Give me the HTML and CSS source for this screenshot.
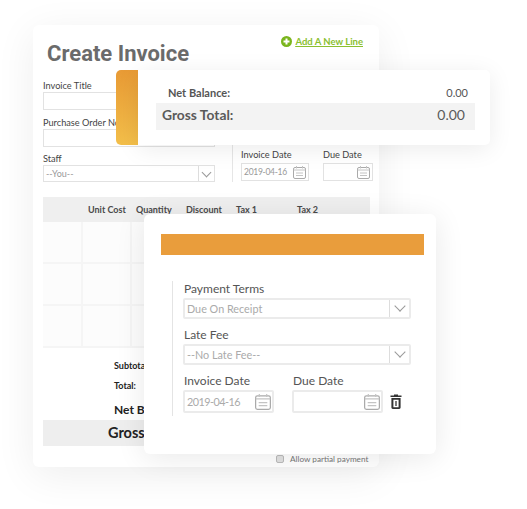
FILE: index.html
```html
<!DOCTYPE html>
<html lang="en">
<head>
  <meta charset="UTF-8">
  <title>Create Invoice</title>
  <link rel="stylesheet" href="styles.css">
</head>
<body>
<div class="page">
  <div class="invoice">
    <div class="head">
      <h1>Create Invoice</h1>
      <a class="add-line" href="#">
        <svg width="11" height="11" viewBox="0 0 11 11"><circle cx="5.5" cy="5.5" r="5.5" fill="#7ab51d"/><path d="M5.5 2.5v6M2.5 5.5h6" stroke="#fff" stroke-width="2"/></svg>
        <span>Add A New Line</span>
      </a>
    </div>
    <div class="form">
      <div class="form-left">
        <label>Invoice Title</label>
        <div class="input"></div>
        <label>Purchase Order No</label>
        <div class="input"></div>
        <label>Staff</label>
        <div class="input select"><span>--You--</span><i class="arrow"></i></div>
      </div>
      <div class="form-right">
        <div class="date">
          <label>Invoice Date</label>
          <div class="input w68"><span class="day">2019-04-16</span>
            <svg class="cal" width="13" height="13" viewBox="0 0 13 13"><use href="#cal"/></svg>
          </div>
        </div>
        <div class="date">
          <label>Due Date</label>
          <div class="input w50">
            <svg class="cal" width="13" height="13" viewBox="0 0 13 13"><use href="#cal"/></svg>
          </div>
        </div>
      </div>
    </div>
    <div class="table-head">
      <span class="c1">Unit Cost</span><span class="c2">Quantity</span><span class="c3">Discount</span><span class="c4">Tax 1</span><span class="c5">Tax 2</span>
    </div>
    <div class="rows">
      <div class="row"><i></i><i></i><i></i></div>
      <div class="row"><i></i><i></i><i></i></div>
      <div class="row"><i></i><i></i><i></i></div>
    </div>
    <div class="totals">
      <p class="sub">Subtotal:</p>
      <p class="total">Total:</p>
      <p class="net">Net Balance:</p>
    </div>
    <div class="gross">Gross Total:</div>
    <div class="partial"><i class="check"></i><span>Allow partial payment</span></div>
  </div>

  <div class="balance">
    <div class="tab"></div>
    <div class="balance-body">
      <div class="net-line"><span>Net Balance:</span><span>0.00</span></div>
      <div class="gross-line"><b>Gross Total:</b><span>0.00</span></div>
    </div>
  </div>

  <div class="terms">
    <div class="terms-bar"></div>
    <div class="terms-form">
      <label>Payment Terms</label>
      <div class="field select"><span>Due On Receipt</span><i class="arrow"></i></div>
      <label>Late Fee</label>
      <div class="field select"><span>--No Late Fee--</span><i class="arrow"></i></div>
      <div class="dates">
        <div>
          <label>Invoice Date</label>
          <div class="field w91"><span class="day">2019-04-16</span>
            <svg class="cal" width="16" height="16" viewBox="0 0 13 13"><use href="#cal"/></svg>
          </div>
        </div>
        <div>
          <label>Due Date</label>
          <div class="field w91 end">
            <svg class="cal" width="16" height="16" viewBox="0 0 13 13"><use href="#cal"/></svg>
          </div>
        </div>
        <svg class="trash" width="12" height="15" viewBox="0 0 12 15"><path d="M4 1.5V.6h4v.9h3.5v1.6H.5V1.500zM1.400 4h9.200v9.600c0 .8-.6 1.400-1.400 1.400H2.800c-.8 0-1.400-.6-1.400-1.400zM3.400 5.800v7.400h5.200V5.800z" fill="#333"/><path d="M6 7v5" stroke="#333" stroke-width="1.300"/></svg>
      </div>
    </div>
  </div>
</div>

<svg width="0" height="0" class="defs">
  <symbol id="cal" viewBox="0 0 13 13">
    <rect x=".5" y="1.500" width="12" height="11" rx="1.500" fill="none" stroke="#aaa"/>
    <path d="M.5 4h12M3.500 0v2.500M9.500 0v2.500M3 7h7M3 9.500h7" stroke="#c4c4c4" fill="none"/>
  </symbol>
</svg>
</body>
</html>
```

FILE: styles.css
```css
*{box-sizing:border-box;}
body{margin:0;background:#fff;font-family:"Lato","Liberation Sans",sans-serif;color:#444;}
p,h1{margin:0;}
.defs{position:absolute;}
.page{position:relative;width:527px;height:509px;overflow:hidden;}

.invoice{margin:25px 0 0 33px;width:346px;height:442px;padding:0 9px 0 10px;background:#fff;border-radius:6px;box-shadow:0 8px 40px rgba(0,0,0,.07);font-size:9.200px;position:relative;}
.head{display:flex;justify-content:space-between;height:54px;padding:16px 7px 0 4px;}
h1{font:700 22px/26px Roboto,sans-serif;color:#6b6b6b;}
.add-line{display:flex;align-items:flex-start;gap:3px;color:#8bc02f;font-size:9.500px;font-weight:700;line-height:11px;margin-top:-5px;height:11px;}
.add-line span{text-decoration:underline;}
.form{display:flex;height:118px;}
.form-left{width:172px;flex:none;}
.form-left label{display:block;line-height:13px;}
.input{height:18px;border:1px solid #e2e2e2;display:flex;align-items:center;justify-content:space-between;padding:0 2px;color:#999;font-size:9px;}
.form-left .input{margin-bottom:6px;}
.form-left .input:nth-of-type(2){margin-bottom:5px;}
.form-left .select{height:17px;padding-right:0;}
.form-right{display:flex;gap:14px;margin-left:17px;margin-top:60px;height:43px;border-left:1px solid #e6e6e6;padding:9px 0 0 8px;}
.date label{display:block;line-height:14px;margin-bottom:1px;}
.w68{width:68px;}
.w50{width:50px;justify-content:flex-end;}
.day{font-size:8.500px;letter-spacing:-.3px;}
.select .arrow{display:block;width:16px;height:100%;border-left:1px solid #ddd;position:relative;flex:none;}
.arrow:after{content:"";position:absolute;left:4px;top:3px;width:6px;height:6px;border-right:1px solid #999;border-bottom:1px solid #999;transform:rotate(45deg);}

.table-head{height:25px;background:#efefef;position:relative;font-size:9px;font-weight:700;color:#4a4a4a;}
.table-head span{position:absolute;top:7px;}
.c1{left:45px;}.c2{left:93px;}.c3{left:143px;}.c4{left:193px;}.c5{left:254px;}
.rows{height:125px;}
.row{display:flex;height:42px;border-bottom:2px solid #f5f5f5;background:#fcfcfc;}
.row i{display:block;height:100%;border-right:2px solid #f5f5f5;width:49px;}
.row i:first-child{width:40px;}
.totals{padding:13px 0 0 71px;height:74px;color:#222;}
.sub,.total{font-size:9px;font-weight:700;line-height:11px;margin-bottom:9px;}
.net{font-size:12px;font-weight:700;line-height:14px;margin-top:12px;}
.gross{height:26px;margin-top:-1px;background:#eee;padding-left:65px;font-size:14.500px;font-weight:700;line-height:25px;color:#222;}
.partial{display:flex;align-items:center;gap:6px;margin-top:8px;padding-left:233px;width:337px;font-size:8.200px;color:#777;white-space:nowrap;}
.check{display:block;width:8px;height:8px;background:#e2e2e2;border:1px solid #bbb;border-radius:2px;}

.balance{position:absolute;left:116px;top:70px;width:374px;height:75px;display:flex;}
.tab{width:22px;background:linear-gradient(#e89a35,#f3bf4a);border-radius:5px 0 0 5px;}
.balance-body{flex:1;background:#fff;border-radius:0 5px 5px 0;box-shadow:0 4px 24px rgba(0,0,0,.08);padding:14px 15px 0 18px;}
.net-line{display:flex;justify-content:space-between;height:19px;padding:0 7px 0 12px;font-size:11px;font-weight:700;line-height:18px;color:#555;}
.net-line span:last-child{font-weight:400;}
.gross-line{display:flex;justify-content:space-between;height:27px;background:#f3f3f3;padding:0 10px 0 6px;font-size:13.800px;line-height:23px;color:#5a5a5a;}
.gross-line span{font-size:14px;}

.terms{position:absolute;left:144px;top:214px;width:292px;height:240px;background:#fff;border-radius:6px;box-shadow:0 4px 30px rgba(0,0,0,.09);padding:20px 12px 0 17px;}
.terms-bar{height:21px;background:#e99d3c;}
.terms-form{margin:26px 0 0 11px;height:135px;border-left:1px solid #e4e4e4;padding-left:10px;font-size:12px;color:#555;}
.terms-form label{display:block;line-height:16px;margin:0 0 1px 1px;}
.field{height:21px;width:228px;border:2px solid #ebebeb;border-radius:2px;margin-bottom:8px;display:flex;align-items:center;justify-content:space-between;padding-left:2px;color:#aaa;font-size:10.800px;}
.field .arrow{display:block;width:20px;height:100%;position:relative;border-left:1px solid #ddd;flex:none;}
.field .arrow:after{left:6px;top:2px;width:7px;height:7px;}
.field .day{font-size:10.800px;letter-spacing:-.5px;}
.dates{display:flex;gap:18px;position:relative;}
.dates .field{height:23px;margin-bottom:0;padding-right:1px;}
.w91{width:91px;}
.end{justify-content:flex-end;}
.trash{position:absolute;left:207px;top:21px;}
```
